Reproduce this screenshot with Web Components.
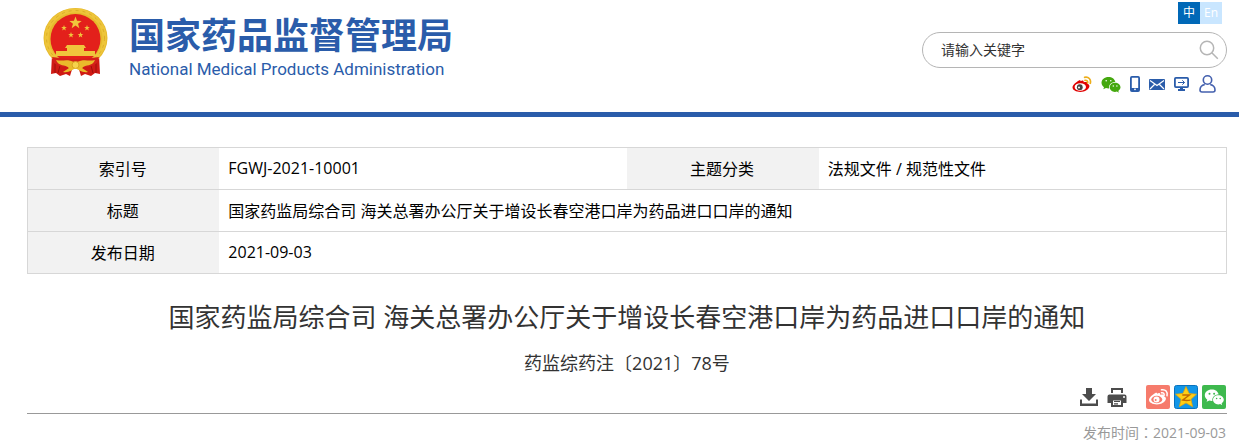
<!DOCTYPE html>
<html lang="zh-CN">
<head>
<meta charset="utf-8">
<meta name="viewport" content="width=device-width, initial-scale=1">
<title>国家药品监督管理局</title>
<style>
body {
    margin: 0;
    background: #fff;
    color: #000;
    font-family: "Open Sans", "Noto Sans CJK SC", sans-serif;
    font-size: 16px;
}
main {
    display: block;
    padding: 30px 12px 0 27px;
}
</style>
</head>
<body>
<site-header>
    <site-logo slot="logo">
        国家药品监督管理局
        <span slot="english">National Medical Products Administration</span>
    </site-logo>
    <lang-switch></lang-switch>
    <search-box placeholder="请输入关键字"></search-box>
    <quick-links></quick-links>
</site-header>
<main>
    <info-table></info-table>
    <doc-heading>
        国家药监局综合司 海关总署办公厅关于增设长春空港口岸为药品进口口岸的通知
        <span slot="number">药监综药注〔2021〕78号</span>
    </doc-heading>
    <share-bar></share-bar>
    <publish-date>发布时间：2021-09-03</publish-date>
</main>

<script>
const weiboBody = `
    <path d="M8.5 5.2C10.4 4 12 4.3 11.7 6.3c2-.8 4.300-.5 3.700 1.500 1.700.5 2.200 1.600 2 2.800-.4 3-4.500 5.400-9 5.400C4 16 .5 14 .5 11.300.5 9 4.500 5.700 6.500 4.700c1.400-.7 2.300-.5 2 .5z"/>`;

const wechatShapes = `
    <path d="M7.500 1C3.500 1 .5 3.600.5 6.800c0 1.900 1 3.400 2.500 4.400l-.7 2.100L5 12c.8.3 1.700.4 2.500.4h.6C7.500 8.500 10.500 5.900 14.300 5.900 13.700 3 11 1 7.500 1z"/>
    <path d="M14 6.700c-3 0-5.300 2-5.300 4.600s2.300 4.600 5.300 4.600c.7 0 1.300-.1 1.900-.3l2 1.100-.6-1.800c1.300-.9 2.200-2.100 2.200-3.600 0-2.600-2.500-4.600-5.500-4.600z"/>`;

const icons = {
    weibo: {w: 20, h: 17, body: `
        <g fill="#e00000">${weiboBody}</g>
        <ellipse cx="8.300" cy="11" rx="5.700" ry="3.800" fill="#fff"/>
        <circle cx="7.800" cy="11.200" r="2.900" fill="#444"/>
        <circle cx="7" cy="11.600" r="1" fill="#fff"/>
        <path d="M12.600 1.300c4-.8 6.700 2 5.700 6M13 4.300c1.800-.3 3 .8 2.600 2.500" fill="none" stroke="#edae1b" stroke-width="1.700" stroke-linecap="round"/>`},
    wechat: {w: 20, h: 17, body: `
        <g fill="#45a80f">${wechatShapes}</g>
        <g fill="#fff"><circle cx="5.200" cy="4.800" r=".8"/><circle cx="9.800" cy="4.800" r=".8"/><circle cx="12.300" cy="10" r=".7"/><circle cx="15.900" cy="10" r=".7"/></g>`},
    phone: {w: 10, h: 16, body: `
        <rect x=".9" y=".9" width="8.200" height="14.200" rx="1" fill="none" stroke="#2a5caa" stroke-width="1.800"/>
        <path d="M1 12h8v3H1z" fill="#2a5caa"/><circle cx="5" cy="13.300" r=".9" fill="#fff"/>`},
    mail: {w: 16, h: 11, body: `
        <rect width="16" height="11" rx="1" fill="#2a5caa"/>
        <path d="M1 1.500l7 5 7-5M1 10l4.500-4.500M15 10l-4.500-4.500" fill="none" stroke="#fff" stroke-width="1.200"/>`},
    screen: {w: 15, h: 14, body: `
        <rect x=".9" y=".9" width="13.200" height="9.200" rx="1" fill="none" stroke="#2a5caa" stroke-width="1.800"/>
        <path d="M6 10h3v2h2v2H4v-2h2z" fill="#2a5caa"/>
        <path d="M4 5.500h6.500M8.300 3.300l2.200 2.200-2.200 2.200" fill="none" stroke="#2a5caa"/>`},
    user: {w: 17, h: 18, body: `
        <g fill="none" stroke="#4460ae" stroke-width="1.600"><circle cx="8.500" cy="5" r="4.200"/>
        <path d="M5.800 9.500C2.500 10.200 1 12.300 1 15c0 1.600.6 2 2 2h11c1.400 0 2-.4 2-2 0-2.700-1.500-4.800-4.800-5.500"/></g>`},
    search: {w: 20, h: 20, body: `
        <g fill="none" stroke="#b5b5b5" stroke-width="1.500"><circle cx="8" cy="8" r="6.700"/><path d="M12.800 12.800l6 6"/></g>`},
    download: {w: 20, h: 18, body: `
        <path d="M7 0h6v6h4l-7 7-7-7h4z" fill="#4c4c4c"/>
        <path d="M1 11.500h2v4h14v-4h2V18H1z" fill="#4c4c4c"/>`},
    print: {w: 20, h: 19, body: `
        <path d="M4 0h12v5H4z" fill="#4c4c4c"/><path d="M6 2h8v3.500H6z" fill="#fff"/>
        <path d="M2.500 6.500h15q2 0 2 2V15h-4v-4h-11v4h-4V8.500q0-2 2-2z" fill="#4c4c4c"/>
        <path d="M5 11.500h10V18H5z" fill="#fff" stroke="#4c4c4c" stroke-width="2"/>
        <path d="M7 13.500h6M7 15.800h4" stroke="#4c4c4c" stroke-width="1.200"/>
        <circle cx="17" cy="9" r="1" fill="#fff"/>`},
    shareWeibo: {w: 24, h: 24, body: `
        <rect width="24" height="24" rx="2" fill="#f67b6c"/>
        <g transform="translate(2.500 3.500)"><g fill="#fff">${weiboBody}</g>
        <ellipse cx="8.300" cy="11" rx="5.500" ry="3.700" fill="#f67b6c"/>
        <circle cx="8" cy="11" r="3" fill="#fff"/><circle cx="7.200" cy="11.500" r="1" fill="#f67b6c"/>
        <path d="M13 1.300c4-.8 6.500 2 5.500 6M13 4.300c1.800-.3 3 .8 2.600 2.500" fill="none" stroke="#fff" stroke-width="1.500" stroke-linecap="round"/></g>`},
    shareQzone: {w: 24, h: 24, body: `
        <rect x=".5" y=".5" width="23" height="23" rx="2" fill="#1296e8" stroke="#0872bd"/>
        <path d="M12 1.500l3.100 6.900 7.400.8-5.500 5 1.600 7.500-6.600-3.800-6.600 3.800L7 14.200l-5.500-5 7.400-.8z" fill="#ffce16" stroke="#e9a400" stroke-width=".7"/>
        <path d="M8.300 10h7.200l-6.700 5c2.400.6 5 .6 7.700.1" fill="none" stroke="#c16a00" stroke-width="1.400"/>`},
    shareWechat: {w: 24, h: 24, body: `
        <rect width="24" height="24" rx="2" fill="#3eb94e"/>
        <g transform="translate(2.300 3.500)"><g fill="#fff">${wechatShapes}</g>
        <g fill="#3eb94e"><circle cx="5.200" cy="5.200" r="1"/><circle cx="9.800" cy="5.200" r="1"/><circle cx="12.300" cy="10" r=".8"/><circle cx="15.900" cy="10" r=".8"/></g></g>`}
};

function icon(name){
    const {w, h, body} = icons[name];
    return `<svg width="${w}" height="${h}" viewBox="0 0 ${w} ${h}" aria-hidden="true">${body}</svg>`;
}

class BaseElement extends HTMLElement {
    constructor(){
        super();
        this.shadowDOM = this.attachShadow({mode: "open"});
    }

    connectedCallback(){
        this.shadowDOM.innerHTML = `
            <style>
            * {
                margin: 0;
                padding: 0;
                box-sizing: border-box;
            }
            :host {
                display: block;
            }
            svg {
                display: block;
            }
            </style>
            ${this.render()}`;
    }
}

class SiteHeader extends BaseElement {
    render(){
        return `
            <style>
            header {
                display: flex;
                justify-content: space-between;
                min-height: 117px;
                padding: 2px 12px 0 43px;
                border-bottom: 5px solid #2a5caa;
            }
            .tools {
                display: flex;
                flex-direction: column;
                align-items: flex-end;
            }
            </style>
            <header>
                <slot name="logo"></slot>
                <div class="tools"><slot></slot></div>
            </header>`;
    }
}

class SiteLogo extends BaseElement {
    star(x, y, size){
        return `<path transform="translate(${x} ${y}) scale(${size})" d="M0-1l.24.67.71.02-.56.43.2.69L0 .4l-.59.41.2-.69-.56-.43.71-.02z"/>`;
    }

    render(){
        return `
            <style>
            a {
                display: flex;
                gap: 20px;
                padding-top: 5px;
                color: #2a5caa;
                text-decoration: none;
                white-space: nowrap;
            }
            h1 {
                font: bold 36px/44px "Noto Sans CJK SC", sans-serif;
                padding-top: 4px;
            }
            p {
                padding-top: 2px;
                font: 17px/24px Roboto, sans-serif;
            }
            </style>
            <a href="#">
                <svg width="66" height="71" viewBox="0 0 66 71" role="img" aria-label="国徽">
                    <path d="M9 48L8 67l5-1 4 3 6-2 4 2 4-13zM56 48l1 19-5-1-4 3-6-2-4 2-4-13z" fill="#cf1a14"/>
                    <path d="M12 53v13M18 55l-3 11M53 53v13M47 55l3 11" stroke="#9e0f0b"/>
                    <ellipse cx="32.500" cy="31" rx="32" ry="30" fill="#e6ba2c"/>
                    <ellipse cx="32.500" cy="31" rx="29" ry="27.500" fill="none" stroke="#eec53a" stroke-width="4"/>
                    <ellipse cx="32.500" cy="31" rx="29" ry="27.500" fill="none" stroke="#dcae28" stroke-dasharray="3 4"/>
                    <circle cx="32.500" cy="32" r="25" fill="#e3201b"/>
                    <g fill="#f0c53c">
                        ${this.star(32.5, 16, 6.5)}
                        ${this.star(21, 21, 3)}
                        ${this.star(44, 21, 3)}
                        ${this.star(28, 28, 3)}
                        ${this.star(37.5, 28, 3)}
                        <path d="M24 38h17l2 3h-2v3h11v5H13v-5h11v-3h-2z"/>
                    </g>
                    <path d="M9 50q24 4 47 0l-2 6q-9 7-22 2-12 5-21-2z" fill="#d4201a"/>
                    <path d="M13 53c8 2 10-2 19.500 3C42 51 44 55 52 53c-3 7-9 4-13 8l6 4c-6 1-9-2-12.500-4-3.500 2-6.500 5-12.500 4l6-4c-4-4-10-1-13-8z" fill="#eabb2b"/>
                    <circle cx="32.500" cy="58" r="3.500" fill="#f6d34c" stroke="#d9a522"/>
                </svg>
                <div>
                    <h1><slot></slot></h1>
                    <p><slot name="english"></slot></p>
                </div>
            </a>`;
    }
}

class LangSwitch extends BaseElement {
    render(){
        return `
            <style>
            nav {
                display: flex;
                padding: 0 5px 8px 0;
            }
            a {
                width: 22px;
                background: #c9e6ff;
                color: #fff;
                font-size: 12px;
                line-height: 22px;
                text-align: center;
                text-decoration: none;
            }
            .active {
                background: #0068b7;
            }
            </style>
            <nav><a class="active" href="#">中</a><a href="#">En</a></nav>`;
    }
}

class SearchBox extends BaseElement {
    render(){
        const placeholder = this.getAttribute("placeholder");
        return `
            <style>
            form {
                display: flex;
                align-items: center;
                width: 305px;
                height: 36px;
                padding: 0 7px 0 18px;
                border: 1px solid #b5b5b5;
                border-radius: 18px;
            }
            input {
                flex: 1;
                min-width: 0;
                padding-bottom: 2px;
                border: 0;
                outline: 0;
                background: none;
                font: inherit;
                font-size: 14px;
            }
            input::placeholder {
                color: #333;
                opacity: 1;
            }
            button {
                border: 0;
                background: none;
            }
            </style>
            <form>
                <input type="text" aria-label="${placeholder}" placeholder="${placeholder}">
                <button type="button" aria-label="搜索">${icon("search")}</button>
            </form>`;
    }
}

class QuickLinks extends BaseElement {
    render(){
        return `
            <style>
            nav {
                display: flex;
                align-items: center;
                gap: 9px;
                padding: 7px 11px 0 0;
            }
            a:last-child {
                padding-left: 1px;
            }
            </style>
            <nav>
                <a href="#" aria-label="微博">${icon("weibo")}</a>
                <a href="#" aria-label="微信">${icon("wechat")}</a>
                <a href="#" aria-label="手机">${icon("phone")}</a>
                <a href="#" aria-label="邮箱">${icon("mail")}</a>
                <a href="#" aria-label="平台">${icon("screen")}</a>
                <a href="#" aria-label="用户">${icon("user")}</a>
            </nav>`;
    }
}

class InfoTable extends BaseElement {
    render(){
        return `
            <style>
            table {
                width: 100%;
                table-layout: fixed;
                border: 1px solid #d7d7d7;
                border-collapse: collapse;
            }
            tr {
                height: 42px;
                border-bottom: 1px solid #d7d7d7;
            }
            th {
                padding: 0 2px 2px 0;
                background: #f2f2f2;
                font-weight: normal;
                text-align: center;
            }
            td {
                padding: 0 0 2px 9px;
            }
            .label {
                width: 16%;
            }
            .value {
                width: 34%;
            }
            </style>
            <table>
                <colgroup><col class="label"><col class="value"><col class="label"><col class="value"></colgroup>
                <tr>
                    <th scope="row">索引号</th><td>FGWJ-2021-10001</td>
                    <th scope="row">主题分类</th><td>法规文件 / 规范性文件</td>
                </tr>
                <tr>
                    <th scope="row">标题</th>
                    <td colspan="3">国家药监局综合司 海关总署办公厅关于增设长春空港口岸为药品进口口岸的通知</td>
                </tr>
                <tr>
                    <th scope="row">发布日期</th><td colspan="3">2021-09-03</td>
                </tr>
            </table>`;
    }
}

class DocHeading extends BaseElement {
    render(){
        return `
            <style>
            :host {
                padding-top: 23px;
                color: #333;
                text-align: center;
            }
            h2 {
                font-size: 26px;
                font-weight: normal;
                line-height: 40px;
            }
            p {
                padding-top: 12px;
                font-size: 18px;
                line-height: 28px;
            }
            </style>
            <h2><slot></slot></h2>
            <p><slot name="number"></slot></p>`;
    }
}

class ShareBar extends BaseElement {
    render(){
        return `
            <style>
            :host {
                padding-top: 8px;
                border-bottom: 1px solid #999;
            }
            div {
                display: flex;
                justify-content: flex-end;
                align-items: center;
                gap: 4px;
                padding: 0 1px 4px 0;
            }
            button {
                border: 0;
                background: none;
            }
            .tool {
                padding-right: 4px;
            }
            .print {
                padding-right: 15px;
            }
            </style>
            <div>
                <button class="tool" type="button" aria-label="下载">${icon("download")}</button>
                <button class="print" type="button" aria-label="打印">${icon("print")}</button>
                <a href="#" aria-label="分享到微博">${icon("shareWeibo")}</a>
                <a href="#" aria-label="分享到QQ空间">${icon("shareQzone")}</a>
                <a href="#" aria-label="分享到微信">${icon("shareWechat")}</a>
            </div>`;
    }
}

class PublishDate extends BaseElement {
    render(){
        return `
            <style>
            p {
                padding: 9px 1px 0 0;
                color: #999;
                font: 14px/20px "Open Sans", "Noto Sans CJK TC", sans-serif;
                text-align: right;
            }
            </style>
            <p lang="zh-TW"><slot></slot></p>`;
    }
}

customElements.define("site-header", SiteHeader);
customElements.define("site-logo", SiteLogo);
customElements.define("lang-switch", LangSwitch);
customElements.define("search-box", SearchBox);
customElements.define("quick-links", QuickLinks);
customElements.define("info-table", InfoTable);
customElements.define("doc-heading", DocHeading);
customElements.define("share-bar", ShareBar);
customElements.define("publish-date", PublishDate);
</script>
</body>
</html>
